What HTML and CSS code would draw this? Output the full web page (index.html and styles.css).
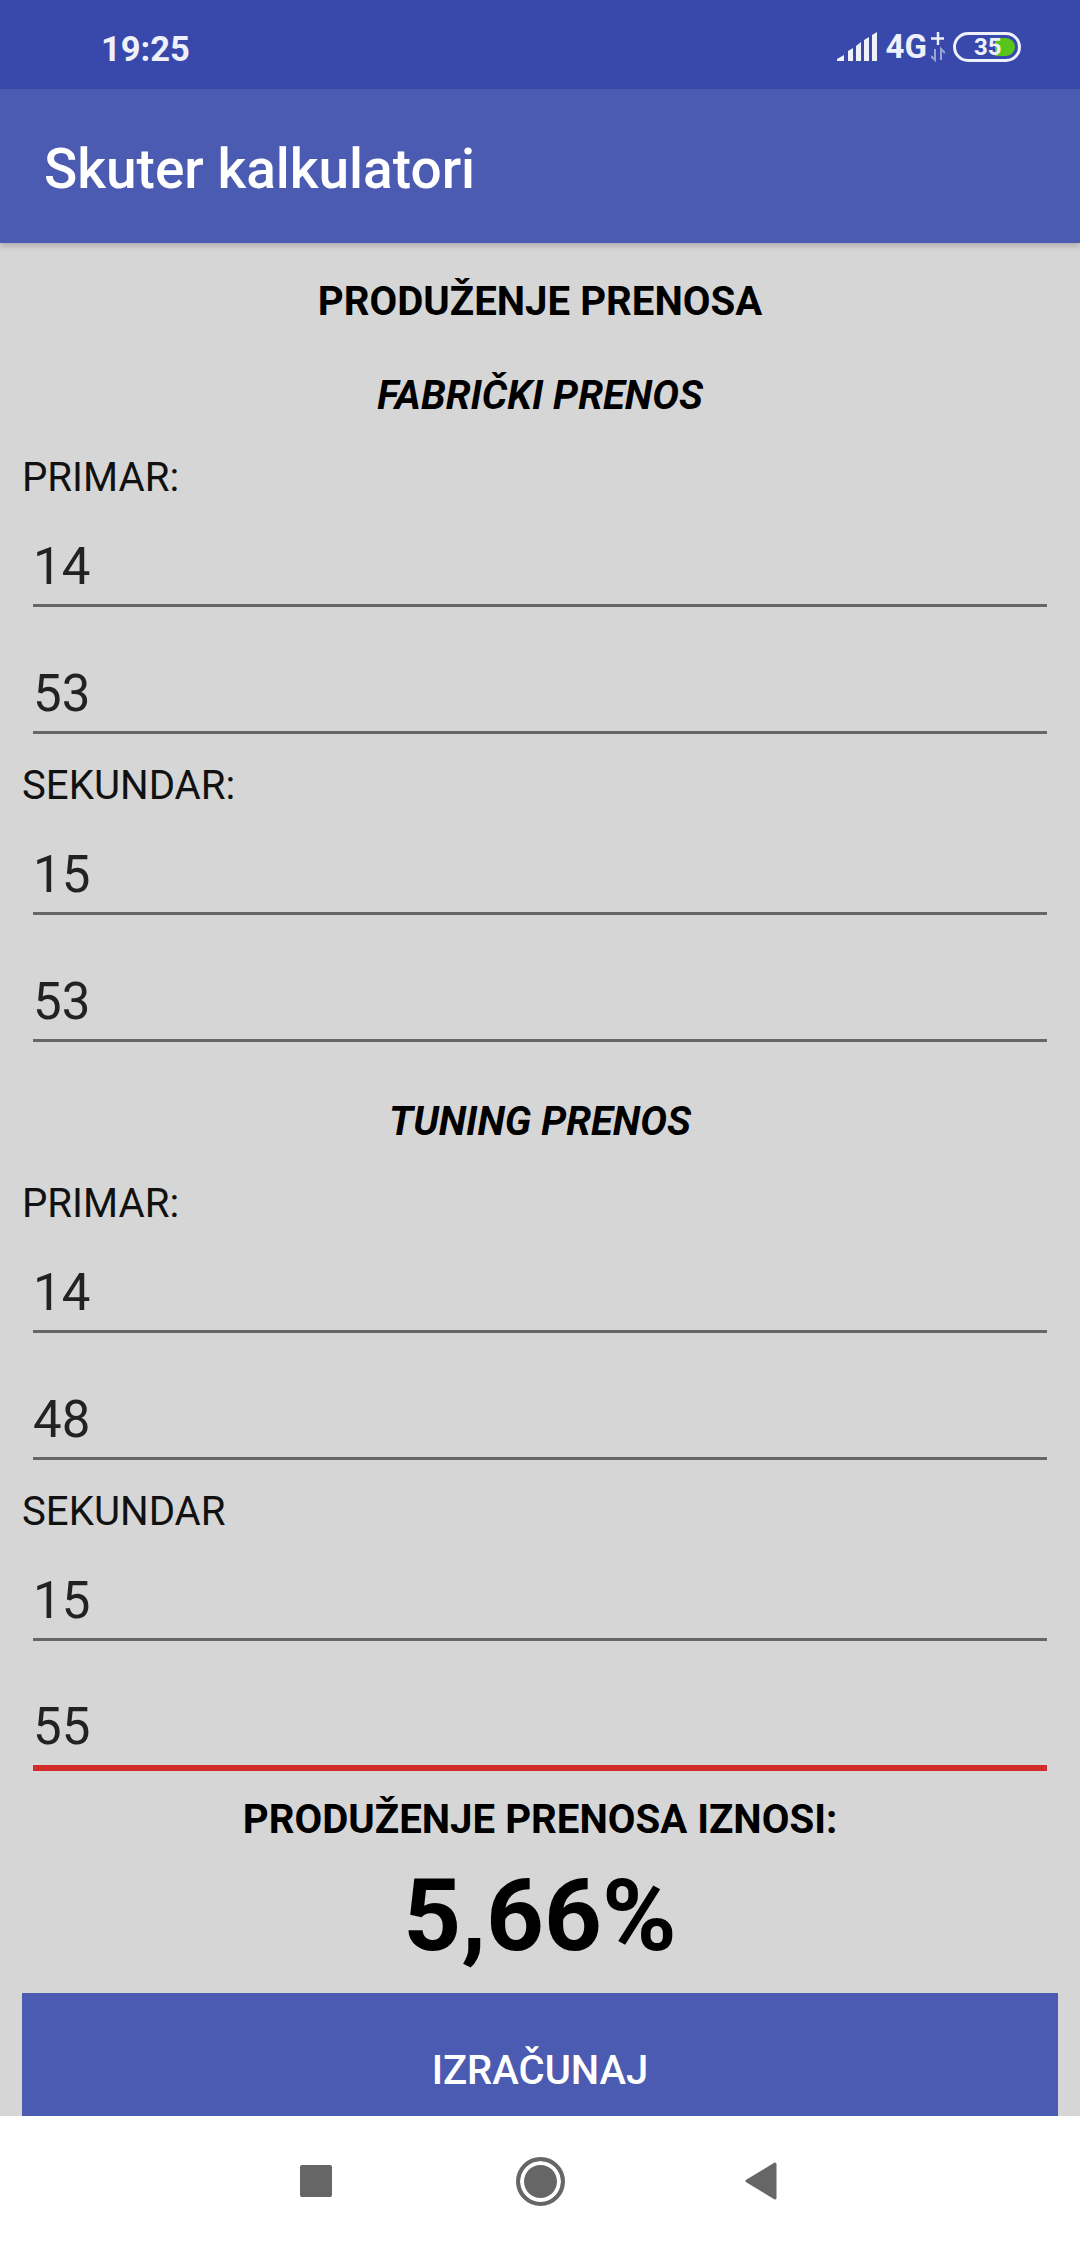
FILE: index.html
```html
<!DOCTYPE html>
<html lang="sr">
<head>
    <meta charset="UTF-8">
    <meta name="viewport" content="width=device-width, initial-scale=1.0">
    <title>Skuter kalkulatori</title>
    <link rel="stylesheet" href="styles.css">
</head>
<body>
    <div class="phone">
        <div class="status-bar">
            <span class="clock">19:25</span>
            <div class="status-icons">
                <svg class="signal" width="40" height="30" viewBox="0 0 40 30">
                    <path d="M0 29V27L7 23V29Z M11 29V19L16 16V29Z M19 29V14L24 10V29Z M27 29V8L32 5V29Z M35 29V3L40 0V29Z" fill="#eef0fa"/>
                </svg>
                <span class="net">4G</span>
                <svg class="net-extra" width="14" height="30" viewBox="0 0 14 30">
                    <path d="M7 0V13M0 6.500H13" stroke="#eef0fa" stroke-width="2.500" fill="none"/>
                    <path d="M4 17V28L0 24M10 28V17L14 21" stroke="#9aa3d6" stroke-width="2" fill="none"/>
                </svg>
                <div class="battery">
                    <div class="battery-fill"></div>
                    <span class="battery-text">35</span>
                </div>
            </div>
        </div>
        <header class="app-bar">Skuter kalkulatori</header>

        <main class="content">
            <h1 class="title">PRODUŽENJE PRENOSA</h1>
            <h2 class="subtitle">FABRIČKI PRENOS</h2>
            <div class="label">PRIMAR:</div>
            <div class="field">14</div>
            <div class="field">53</div>
            <div class="label">SEKUNDAR:</div>
            <div class="field">15</div>
            <div class="field">53</div>

            <h2 class="subtitle subtitle-tuning">TUNING PRENOS</h2>
            <div class="label">PRIMAR:</div>
            <div class="field">14</div>
            <div class="field">48</div>
            <div class="label">SEKUNDAR</div>
            <div class="field">15</div>
            <div class="field field-active">55</div>

            <div class="result-label">PRODUŽENJE PRENOSA IZNOSI:</div>
            <div class="result">5,66%</div>
            <button class="calc-btn">IZRAČUNAJ</button>
        </main>

        <nav class="nav-bar">
            <div class="nav-cell nav-cell-first"><div class="nav-square"></div></div>
            <div class="nav-cell"><div class="nav-circle"></div></div>
            <div class="nav-cell nav-cell-last">
                <svg width="32" height="38" viewBox="0 0 32 38">
                    <path d="M30 2L2 19L30 36Z" fill="#666" stroke="#666" stroke-width="3" stroke-linejoin="round"/>
                </svg>
            </div>
        </nav>
    </div>
</body>
</html>
```

FILE: styles.css
```css
* {
    box-sizing: border-box;
}
body {
    margin: 0;
    font-family: Roboto, sans-serif;
    background: #d6d6d6;
}
.phone {
    width: 1080px;
    height: 2246px;
    display: flex;
    flex-direction: column;
    overflow: hidden;
}
.status-bar {
    height: 89px;
    flex: none;
    background: #3949ab;
    color: #eef0fa;
    display: flex;
    align-items: center;
    justify-content: space-between;
    padding: 0 59px 0 101px;
}
.clock {
    font-size: 34.500px;
    font-weight: 700;
    padding-top: 8px;
}
.status-icons {
    display: flex;
    align-items: center;
    padding-top: 4px;
}
.signal {
    margin-right: 9px;
}
.net {
    font-size: 33px;
    font-weight: 700;
    margin-right: 4px;
}
.net-extra {
    margin-right: 8px;
}
.battery {
    position: relative;
    width: 68px;
    height: 30px;
    border: 3px solid #eef0fa;
    border-radius: 15px;
}
.battery-fill {
    position: absolute;
    right: 3px;
    top: 3px;
    bottom: 3px;
    width: 20px;
    background: #57c51c;
    border-radius: 0 10px 10px 0;
}
.battery-text {
    position: absolute;
    left: 18px;
    top: -3px;
    font-size: 24px;
    line-height: 30px;
    font-weight: 700;
}
.app-bar {
    height: 154px;
    flex: none;
    background: #4b5bb1;
    color: #fff;
    font-size: 55px;
    font-weight: 500;
    line-height: 161px;
    padding-left: 44px;
    box-shadow: 0 3px 6px rgba(0, 0, 0, 0.2);
    position: relative;
}
.content {
    flex: 1;
    min-height: 0;
    background: #d6d6d6;
    display: flex;
    flex-direction: column;
    padding: 0 22px;
}
.title {
    margin: 36px 0 0;
    height: 46px;
    line-height: 46px;
    font-size: 40.200px;
    font-weight: 700;
    text-align: center;
    color: #000;
}
.subtitle {
    margin: 48px 0 6px;
    height: 46px;
    line-height: 46px;
    font-size: 40px;
    font-weight: 700;
    font-style: italic;
    text-align: center;
    color: #000;
}
.subtitle-tuning {
    margin-top: 57px;
}
.label {
    height: 52px;
    margin-top: 26px;
    line-height: 52px;
    font-size: 40.200px;
    color: #111;
}
.subtitle + .label {
    margin-top: 27px;
}
.field {
    height: 127px;
    flex: none;
    margin: 0 11px;
    padding-bottom: 8px;
    display: flex;
    align-items: flex-end;
    font-size: 51px;
    line-height: 58px;
    color: #222;
    border-bottom: 3px solid #666;
}
.label + .field {
    height: 103px;
}
.field-active {
    height: 130px;
    padding-bottom: 9px;
    border-bottom: 6px solid #d32a2a;
}
.result-label {
    margin-top: 26px;
    height: 46px;
    line-height: 46px;
    font-size: 40.200px;
    font-weight: 700;
    text-align: center;
    color: #000;
}
.result {
    margin-top: 18px;
    height: 110px;
    line-height: 110px;
    font-size: 101px;
    font-weight: 700;
    text-align: center;
    color: #000;
}
.calc-btn {
    display: block;
    width: 100%;
    height: 123px;
    margin-top: auto;
    border: 0;
    padding: 32px 0 0;
    background: #4b5bb1;
    color: #fff;
    font-family: inherit;
    font-size: 40px;
    font-weight: 500;
}
.nav-bar {
    height: 130px;
    flex: none;
    background: #fff;
    display: flex;
    justify-content: center;
    align-items: center;
}
.nav-cell {
    width: 222px;
    display: flex;
    justify-content: center;
    align-items: center;
}
.nav-cell-first {
    padding-right: 4px;
}
.nav-cell-last {
    padding-right: 2px;
}
.nav-square {
    width: 32px;
    height: 32px;
    background: #666;
    border-radius: 2px;
}
.nav-circle {
    width: 49px;
    height: 49px;
    border: 4px solid #666;
    border-radius: 50%;
    background: #666;
    box-shadow: inset 0 0 0 4px #fff;
}
```
